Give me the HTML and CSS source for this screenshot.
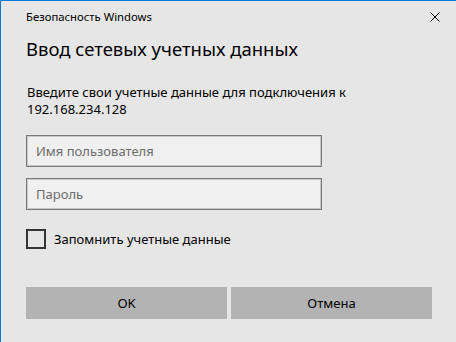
FILE: index.html
```html
<!DOCTYPE html>
<html lang="ru">
<head>
<meta charset="utf-8">
<link rel="stylesheet" href="styles.css">
</head>
<body>
<div class="window">
  <div class="titlebar">
    <span class="app-title">Безопасность Windows</span>
    <span class="close" aria-label="Закрыть">
      <svg width="10" height="10" viewBox="0 0 10 10"><path d="M0.5 0.5 L9.5 9.5 M9.5 0.5 L0.5 9.5" stroke="#000" stroke-width="1" fill="none"/></svg>
    </span>
  </div>
  <h1 class="heading">Ввод сетевых учетных данных</h1>
  <p class="message">Введите свои учетные данные для подключения к<br>192.168.234.128</p>
  <div class="fields">
    <div class="field">Имя пользователя</div>
    <div class="field">Пароль</div>
  </div>
  <label class="remember"><span class="checkbox"></span><span>Запомнить учетные данные</span></label>
  <div class="buttons">
    <div class="btn">OK</div>
    <div class="btn">Отмена</div>
  </div>
</div>
</body>
</html>
```
FILE: styles.css
```css
html, body {
  margin: 0;
  padding: 0;
}
body {
  background: #e6e6e6;
  font-family: "Noto Sans", "Open Sans", sans-serif;
  color: #000;
}
.window {
  width: 456px;
  height: 342px;
  box-sizing: border-box;
  border-top: 1px solid #0078d7;
  border-left: 1px solid #0078d7;
  background: #e6e6e6;
  padding-left: 25px;
  display: flex;
  flex-direction: column;
}
.titlebar {
  height: 32px;
  display: flex;
  align-items: center;
  justify-content: space-between;
  padding-right: 16px;
}
.app-title {
  font-size: 11.3px;
  line-height: 16px;
}
.close {
  display: flex;
  width: 10px;
  height: 10px;
}
.heading {
  margin: 2px 0 0 0;
  font-size: 18.5px;
  font-weight: normal;
  line-height: 28px;
}
.message {
  margin: 21px 0 0 1px;
  font-size: 13px;
  line-height: 17px;
}
.fields {
  margin-top: 17px;
  display: flex;
  flex-direction: column;
  gap: 11px;
  width: 296px;
}
.field {
  height: 32px;
  box-sizing: border-box;
  border: 1px solid #7a7a7a;
  box-shadow: inset 0 0 0 1px rgba(122, 122, 122, 0.35);
  background: #f0f0f0;
  color: #6d6d6d;
  font-size: 13px;
  line-height: 30px;
  padding-left: 9px;
}
.remember {
  margin-top: 19px;
  display: flex;
  align-items: center;
  gap: 8px;
  font-size: 13px;
  line-height: 20px;
}
.checkbox {
  width: 20px;
  height: 20px;
  box-sizing: border-box;
  border: 2px solid #333;
}
.buttons {
  margin-top: 38px;
  display: flex;
  gap: 4px;
  width: 406px;
}
.btn {
  flex: 1;
  height: 32px;
  background: #b3b3b3;
  font-size: 13px;
  line-height: 32px;
  text-align: center;
}
```
